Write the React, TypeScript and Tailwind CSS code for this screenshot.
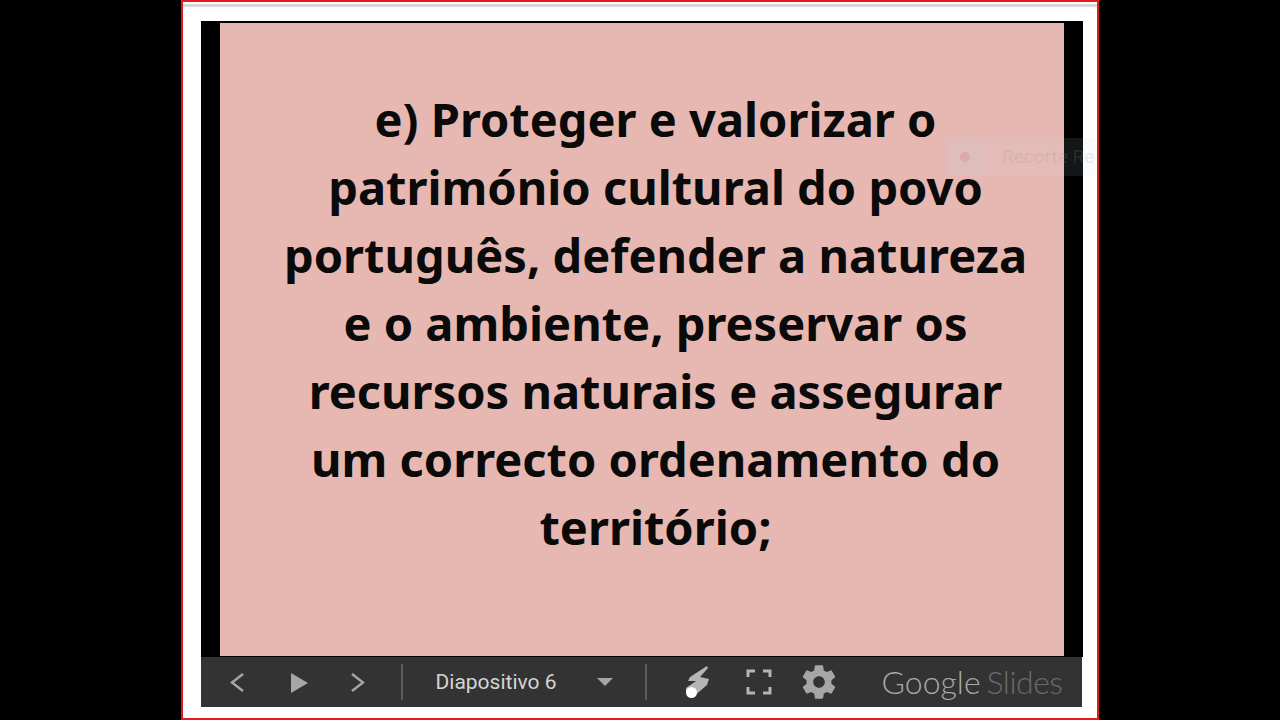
export default function App() {
  const lines = [
    "e) Proteger e valorizar o",
    "património cultural do povo",
    "português, defender a natureza",
    "e o ambiente, preservar os",
    "recursos naturais e assegurar",
    "um correcto ordenamento do",
    "território;",
  ];

  return (
    <div className="relative flex h-[720px] w-[1280px] justify-center overflow-hidden bg-black">
      <div className="ml-[-1px] flex h-[720px] w-[918px] flex-col border-2 border-[#e31b1b] bg-white pl-[18px]">
        <div className="ml-[-18px] mt-[2px] h-[3px] shrink-0 bg-[#d9d9d9]" />
        <div className="mt-[14px] flex h-[636px] w-[882px] shrink-0 border-t-2 border-black bg-black px-[19px]">
          <div className="flex h-[633px] w-[844px] flex-col items-center bg-[#e7b8b1] pt-[62px] pl-[28px] font-['Noto_Sans',sans-serif] text-[47px] leading-[68px] font-bold text-[#0a0a0a]">
            {lines.map((line) => (
              <div key={line} className="whitespace-nowrap">{line}</div>
            ))}
          </div>
        </div>
        <div className="flex h-[50px] w-[881px] shrink-0 items-center bg-[#333333] text-[#b5b5b5]">
          <svg width="200" height="50" viewBox="0 0 200 50" className="shrink-0">
            <path d="M42 17 L31 25.5 L42 34" fill="none" stroke="#a6a6a6" strokeWidth="2.4" />
            <path d="M90 16 L107 26 L90 36 Z" fill="#a6a6a6" />
            <path d="M151 17 L162 25.5 L151 34" fill="none" stroke="#a6a6a6" strokeWidth="2.4" />
          </svg>
          <div className="h-[36px] w-[2px] shrink-0 bg-[#5c5c5c]" />
          <div className="ml-[33px] w-[145px] shrink-0 whitespace-nowrap font-['Roboto',sans-serif] text-[21px] leading-[24px] text-[#d4d4d4]">Diapositivo 6</div>
          <svg width="16" height="8" viewBox="0 0 16 8" className="ml-[16px] shrink-0">
            <path d="M0 0 H16 L8 8 Z" fill="#a6a6a6" />
          </svg>
          <div className="ml-[32px] h-[36px] w-[2px] shrink-0 bg-[#5c5c5c]" />
          <svg width="26" height="33" viewBox="0 0 26 33" className="ml-[38px] shrink-0">
            <path d="M22 0 L5 11 L3 15 L11 15 L1 22 L1 26 L8 31 L22 19 L24 13 L15 11 L23 2 Z" fill="#b5b5b5" />
            <circle cx="6.5" cy="26.5" r="5.5" fill="#ffffff" />
          </svg>
          <svg width="26" height="26" viewBox="0 0 26 26" className="ml-[35px] shrink-0">
            <path d="M2 8 V2 H9 M17 2 H24 V8 M24 18 V24 H17 M9 24 H2 V18" fill="none" stroke="#b5b5b5" strokeWidth="3" />
          </svg>
          <svg width="40" height="40" viewBox="0 0 24 24" className="ml-[27px] shrink-0">
            <path
              fill="#a6a6a6"
              d="M19.43 12.98c.04-.32.07-.64.07-.98s-.03-.66-.07-.98l2.11-1.65c.19-.15.24-.42.12-.64l-2-3.46c-.12-.22-.39-.3-.61-.22l-2.49 1c-.52-.4-1.08-.73-1.69-.98l-.38-2.65C14.46 2.18 14.25 2 14 2h-4c-.25 0-.46.18-.49.42l-.38 2.65c-.61.25-1.17.59-1.69.98l-2.49-1c-.23-.09-.49 0-.61.22l-2 3.46c-.13.22-.07.49.12.64l2.11 1.65c-.04.32-.07.65-.07.98s.03.66.07.98l-2.11 1.65c-.19.15-.24.42-.12.64l2 3.46c.12.22.39.3.61.22l2.49-1c.52.4 1.08.73 1.69.98l.38 2.65c.03.24.24.42.49.42h4c.25 0 .46-.18.49-.42l.38-2.65c.61-.25 1.17-.59 1.69-.98l2.49 1c.23.09.49 0 .61-.22l2-3.46c.12-.22.07-.49-.12-.64l-2.11-1.65zM12 15.5c-1.93 0-3.5-1.57-3.5-3.5s1.57-3.5 3.5-3.5 3.5 1.57 3.5 3.5-1.57 3.5-3.5 3.5z"
            />
          </svg>
          <div className="ml-[43px] whitespace-nowrap font-['Lato',sans-serif] text-[32px] leading-[36px] font-light">
            <span className="text-[#a8a8a8]">Google</span>
            <span className="ml-[6px] tracking-[-0.5px] text-[#6a6a6a]">Slides</span>
          </div>
        </div>
      </div>
      <div className="absolute top-[138px] left-[946px] flex h-[38px] w-[151px] items-center bg-[#c8e0ec]/10">
        <div className="flex h-[38px] w-[38px] shrink-0 items-center justify-center bg-[#c0c0d0]/15">
          <div className="h-[10px] w-[10px] rounded-full bg-[#d99a94]/50" />
        </div>
        <div className="ml-[18px] whitespace-nowrap font-['Roboto',sans-serif] text-[19px] text-[#a08a88]/20">Recorte Re</div>
      </div>
    </div>
  );
}
